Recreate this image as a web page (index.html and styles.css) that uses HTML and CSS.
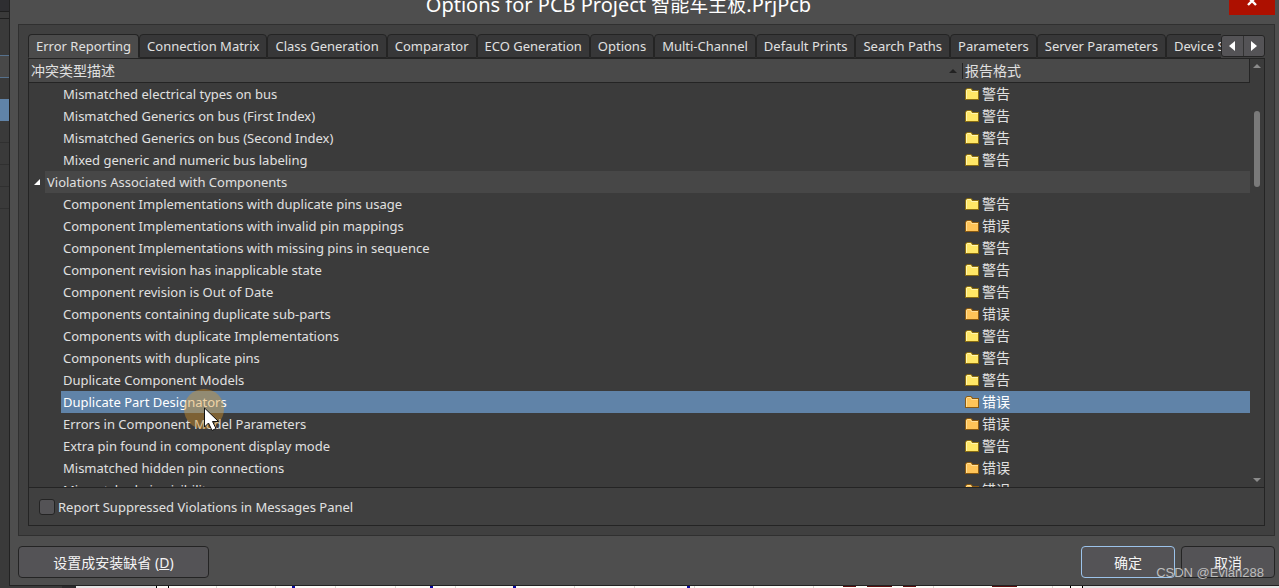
FILE: index.html
```html
<!DOCTYPE html>
<html lang="zh-CN">
<head>
  <meta charset="UTF-8">
  <meta name="viewport" content="width=device-width, initial-scale=1.0">
  <link rel="stylesheet" href="styles.css">
  <title>Options for PCB Project</title>
</head>
<body>
<!-- folder icons shared by the report column -->
<svg class="defs" width="0" height="0">
  <symbol id="warn" viewBox="0 0 14 12">
    <path d="M0 12V2l1-1 1-1h4l2 2h6v10H0z" fill="#8a6d12"/>
    <path d="M1 11V2l1-1h4l1 2h6v8z" fill="#ffe766"/>
    <path d="M1.500 11V2.500l1-1h3l1 2H13" fill="none" stroke="#fff6b0"/>
  </symbol>
  <symbol id="err" viewBox="0 0 14 12">
    <path d="M0 12V2l1-1 1-1h4l2 2h6v10H0z" fill="#8a5a12"/>
    <path d="M1 11V2l1-1h4l1 2h6v8z" fill="#ffc458"/>
    <path d="M1.500 11V2.500l1-1h3l1 2H13" fill="none" stroke="#ffdf98"/>
  </symbol>
</svg>
<div class="window">
  <div class="side">
    <i class="s1"></i><i class="s2"></i><i class="s3"></i><i class="s4"></i><i class="s5"></i><i class="s6"></i><i class="s7"></i>
  </div>
  <div class="dialog">
    <div class="titlebar">
      <h1>Options for PCB Project <span>智能车主板</span>.PrjPcb</h1>
      <button class="close" aria-label="Close"><svg width="12" height="14" viewBox="0 0 12 14"><path d="M2 3l8 8M10 3L2 11" stroke="#fff" stroke-width="2.4"/></svg></button>
    </div>
    <div class="panel">
      <div class="tabbar">
        <div class="tabs">
          <button class="tab active">Error Reporting</button>
          <button class="tab">Connection Matrix</button>
          <button class="tab">Class Generation</button>
          <button class="tab">Comparator</button>
          <button class="tab">ECO Generation</button>
          <button class="tab">Options</button>
          <button class="tab">Multi-Channel</button>
          <button class="tab">Default Prints</button>
          <button class="tab">Search Paths</button>
          <button class="tab">Parameters</button>
          <button class="tab">Server Parameters</button>
          <button class="tab">Device Sheets</button>
        </div>
        <div class="nav">
          <button aria-label="Previous"><svg width="6" height="10" viewBox="0 0 6 10"><path d="M6 0v10L0 5z" fill="#fff"/></svg></button>
          <button aria-label="Next"><svg width="6" height="10" viewBox="0 0 6 10"><path d="M0 0v10l6-5z" fill="#fff"/></svg></button>
        </div>
      </div>
      <div class="page">
        <div class="grid">
          <div class="list">
            <table>
              <thead>
                <tr><th><div class="sort">冲突类型描述<svg width="8" height="4" viewBox="0 0 8 4"><path d="M0 4l4-4 4 4z" fill="#222"/></svg></div></th><th class="report">报告格式</th></tr>
              </thead>
              <tbody>
                <tr><td>Mismatched electrical types on bus</td><td><svg><use href="#warn"/></svg>警告</td></tr>
                <tr><td>Mismatched Generics on bus (First Index)</td><td><svg><use href="#warn"/></svg>警告</td></tr>
                <tr><td>Mismatched Generics on bus (Second Index)</td><td><svg><use href="#warn"/></svg>警告</td></tr>
                <tr><td>Mixed generic and numeric bus labeling</td><td><svg><use href="#warn"/></svg>警告</td></tr>
                <tr class="group"><td colspan="2"><div class="groupname"><svg class="arrow" viewBox="0 0 6 6"><path d="M6 0v6H0z" fill="#fff"/></svg><span>Violations Associated with Components</span></div></td></tr>
                <tr><td>Component Implementations with duplicate pins usage</td><td><svg><use href="#warn"/></svg>警告</td></tr>
                <tr><td>Component Implementations with invalid pin mappings</td><td><svg><use href="#err"/></svg>错误</td></tr>
                <tr><td>Component Implementations with missing pins in sequence</td><td><svg><use href="#warn"/></svg>警告</td></tr>
                <tr><td>Component revision has inapplicable state</td><td><svg><use href="#warn"/></svg>警告</td></tr>
                <tr><td>Component revision is Out of Date</td><td><svg><use href="#warn"/></svg>警告</td></tr>
                <tr><td>Components containing duplicate sub-parts</td><td><svg><use href="#err"/></svg>错误</td></tr>
                <tr><td>Components with duplicate Implementations</td><td><svg><use href="#warn"/></svg>警告</td></tr>
                <tr><td>Components with duplicate pins</td><td><svg><use href="#warn"/></svg>警告</td></tr>
                <tr><td>Duplicate Component Models</td><td><svg><use href="#warn"/></svg>警告</td></tr>
                <tr class="selected"><td>Duplicate Part Designators</td><td><svg><use href="#err"/></svg>错误</td></tr>
                <tr><td>Errors in Component Model Parameters</td><td><svg><use href="#err"/></svg>错误</td></tr>
                <tr><td>Extra pin found in component display mode</td><td><svg><use href="#warn"/></svg>警告</td></tr>
                <tr><td>Mismatched hidden pin connections</td><td><svg><use href="#err"/></svg>错误</td></tr>
                <tr><td>Mismatched pin visibility</td><td><svg><use href="#err"/></svg>错误</td></tr>
              </tbody>
            </table>
          </div>
          <div class="scrollbar">
            <svg width="8" height="4" viewBox="0 0 8 4"><path d="M0 4l4-4 4 4z" fill="#8b8b8b"/></svg>
            <div class="thumb"></div>
            <svg class="down" width="8" height="4" viewBox="0 0 8 4"><path d="M0 0h8L4 4z" fill="#8b8b8b"/></svg>
          </div>
        </div>
        <div class="option">
          <input type="checkbox" id="suppressed">
          <label for="suppressed">Report Suppressed Violations in Messages Panel</label>
        </div>
      </div>
    </div>
    <div class="footer">
      <button class="btn defaults">设置成安装缺省 (<u>D</u>)</button>
      <button class="btn ok">确定</button>
      <button class="btn">取消</button>
    </div>
  </div>
</div>
<!-- strip of the schematic sheet under the dialog -->
<svg class="sheet" height="2" viewBox="0 0 1279 2" preserveAspectRatio="none">
  <path d="M0 0h62v3H0z" fill="#3a3a3a"/>
  <path d="M62 0h14v3H62z" fill="#2b2b2d"/>
  <path d="M76 0h80v3H76zM1083 0h196v3h-196z" fill="#e4e4e4"/>
  <path d="M156 0h1v3h-1zM168 0h1v3h-1zM1070 0h1v3h-1zM1082 0h1v3h-1z" fill="#000"/>
  <path d="M216 0h1v3h-1zM275 0h1v3h-1zM335 0h1v3h-1zM395 0h1v3h-1zM455 0h1v3h-1zM574 0h1v3h-1zM634 0h1v3h-1zM694 0h1v3h-1zM753 0h1v3h-1zM813 0h1v3h-1zM933 0h1v3h-1zM1052 0h1v3h-1z" fill="#d8d4cf"/>
  <path d="M292 0h3v3h-3zM430 0h3v3h-3zM513 0h3v3h-3zM687 0h3v3h-3z" fill="#0a0aa0"/>
  <path d="M843 0h13v1h-13zM867 0h25v1h-25zM903 0h13v1h-13zM992 0h25v1h-25z" fill="#5f0f0f"/>
</svg>
<svg class="pointer" width="40" height="42" viewBox="0 0 40 42">
  <circle cx="20" cy="20" r="20" fill="#d9952b" fill-opacity=".42"/>
  <path d="M20.500 19v19l4-4 3.500 7.500 4-2-3.500-7h6z" fill="#fff" stroke="#111" stroke-width="1"/>
</svg>
<div class="watermark">CSDN @Evian288</div>
</body>
</html>
```
FILE: styles.css
```css
*{
  box-sizing:border-box;
}
body{
  margin:0;
  height:100vh;
  display:flex;
  flex-direction:column;
  overflow:hidden;
  position:relative;
  background-color:#fdfbf7;
  color:#e0e0e0;
  font-family:"Noto Sans","Noto Sans CJK SC",sans-serif;
  font-size:13px;
}
button{
  font:inherit;
  color:inherit;
  margin:0;
  padding:0;
  border:none;
}
svg{
  display:block;
}
.defs{
  position:absolute;
}
.window{
  flex:1;
  min-height:0;
  display:flex;
}
.sheet{
  width:100%;
  flex:none;
}

/* editor behind the dialog */
.side{
  width:9px;
  flex:none;
  display:flex;
  flex-direction:column;
  background-color:#3a3a3a;
}
.side i{
  flex:none;
}
.s1{
  height:12px;
  background-color:#2e2e31;
  border-bottom:1px solid #1f1f1f;
}
.s2{
  height:7px;
  border-bottom:1px solid #1f1f1f;
}
.s3{
  height:36px;
}
.s4{
  height:23px;
  background-color:#484848;
  border-top:1px solid #56718d;
  border-bottom:1px solid #56718d;
}
.s5{
  height:21px;
}
.s6{
  height:22px;
  background-color:#6083a8;
}
.s7{
  height:89px;
  background-image:repeating-linear-gradient(#3a3a3a 0 21px,#303030 21px 22px);
}

.dialog{
  flex:1;
  min-width:0;
  display:flex;
  flex-direction:column;
  padding:0 4px 0 8px;
  background-color:#4e4e4e;
  border-left:1px solid #222;
  border-bottom:1px solid #222;
}
.titlebar{
  flex:none;
  height:24px;
  position:relative;
}
h1{
  margin:0;
  margin-top:-9px;
  padding-right:56px;
  font-size:20px;
  line-height:28px;
  font-weight:normal;
  text-align:center;
  color:#fff;
}
h1 span{
  font-size:19px;
}
.close{
  position:absolute;
  right:0;
  top:-6px;
  width:46px;
  height:21px;
  background-color:#ad1000;
  display:flex;
  align-items:flex-start;
  justify-content:center;
}

.panel{
  flex:1;
  min-height:0;
  display:flex;
  flex-direction:column;
  padding:9px;
  background-color:#404040;
  border:1px solid #303030;
}
.tabbar{
  flex:none;
  display:flex;
  height:24px;
}
.tabs{
  flex:1;
  min-width:0;
  display:flex;
  overflow:hidden;
}
.tab{
  flex:none;
  padding:0 7px;
  background-color:#373738;
  border:1px solid #242424;
  border-radius:4px 4px 0 0;
  line-height:20px;
}
.tab.active{
  background-color:#4b4b4b;
  border-bottom-color:#4b4b4b;
}
.nav{
  flex:none;
  display:flex;
  width:44px;
  height:22px;
  margin-top:1px;
  background-color:#545356;
  border:1px solid #242424;
  border-radius:3px;
}
.nav button{
  flex:1;
  display:flex;
  align-items:center;
  justify-content:center;
  background-color:transparent;
}
.nav button:first-child{
  border-right:1px solid #333;
}

.page{
  flex:1;
  min-height:0;
  display:flex;
  flex-direction:column;
  border:1px solid #242424;
}
.grid{
  flex:1;
  min-height:0;
  display:flex;
  background-color:#3b3b3b;
  border-bottom:1px solid #242424;
}
.list{
  flex:1;
  min-width:0;
  overflow:hidden;
}
table{
  width:100%;
  table-layout:fixed;
  border-spacing:0;
}
th{
  height:24px;
  padding:0 0 0 2px;
  background-color:#494949;
  border-bottom:1px solid #242424;
  font-size:14px;
  line-height:20px;
  font-weight:normal;
  text-align:left;
}
.report{
  width:287px;
  border-right:1px solid #242424;
}
.sort{
  display:flex;
  align-items:center;
  justify-content:space-between;
  padding-right:5px;
  border-right:1px solid #242424;
  line-height:16px;
}
td{
  height:22px;
  padding:0 2px;
  line-height:20px;
  white-space:nowrap;
}
td:first-child{
  border-left:32px solid #3b3b3b;
}
td:last-child{
  font-size:14px;
}
td svg{
  display:inline-block;
  width:14px;
  height:12px;
  margin-right:3px;
  vertical-align:-1px;
}
.group td:first-child{
  padding:0;
  border:none;
  font-size:13px;
}
.groupname{
  display:flex;
  align-items:center;
}
.groupname .arrow{
  flex:none;
  width:6px;
  height:6px;
  margin:0 5px;
}
.groupname span{
  flex:1;
  padding:0 2px;
  line-height:22px;
  background-color:#474747;
}
.selected td{
  background-color:#6083a8;
  color:#fff;
}
.scrollbar{
  flex:none;
  width:14px;
  padding:5px 4px;
  display:flex;
  flex-direction:column;
}
.scrollbar svg{
  flex:none;
  align-self:center;
}
.thumb{
  width:6px;
  height:76px;
  margin-top:43px;
  border-radius:3px;
  background-color:#7a7a7a;
}
.down{
  margin-top:auto;
}
.option{
  flex:none;
  height:37px;
  padding-left:10px;
  display:flex;
  align-items:center;
  gap:3px;
}
.option input{
  appearance:none;
  width:16px;
  height:16px;
  margin:0;
  background-color:#545356;
  border:1px solid #242424;
  border-radius:3px;
}

.footer{
  flex:none;
  display:flex;
  gap:6px;
  padding:10px 0 7px;
}
.btn{
  width:94px;
  height:32px;
  background-color:#545356;
  border:1px solid #242424;
  border-radius:4px;
  font-size:14px;
  color:#f4f4f4;
}
.defaults{
  width:191px;
  margin-right:auto;
}
.ok{
  border-color:#9cc3ea;
}

.pointer{
  position:absolute;
  left:184px;
  top:389px;
}
.watermark{
  position:absolute;
  right:15px;
  bottom:6px;
  font-family:"Liberation Sans",sans-serif;
  font-size:13px;
  line-height:18px;
  color:#bdbdbd;
}
```
